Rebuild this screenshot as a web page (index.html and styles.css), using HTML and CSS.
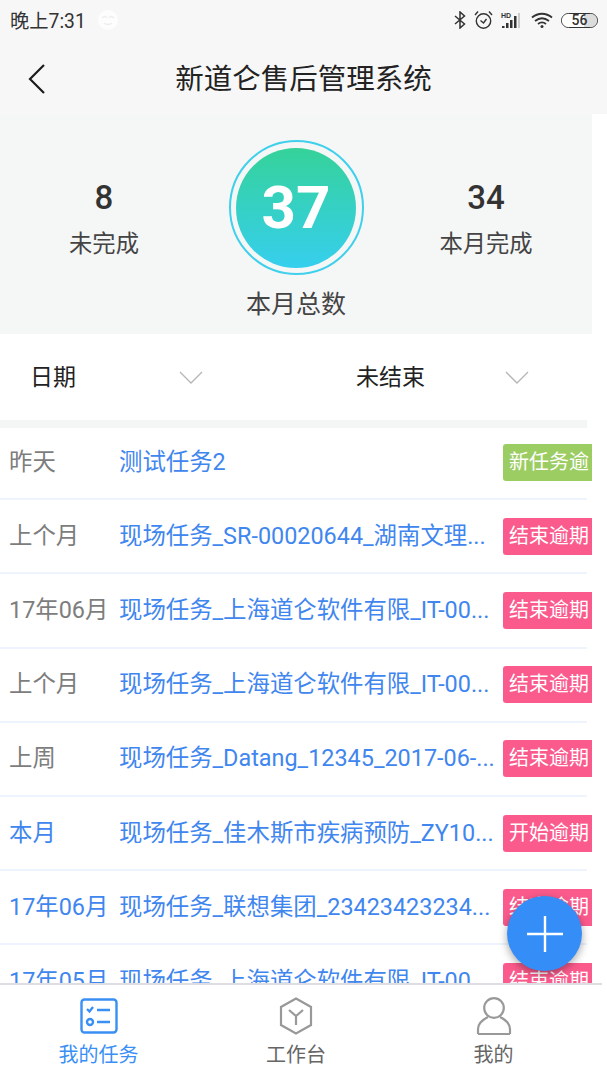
FILE: index.html
```html
<!DOCTYPE html>
<html lang="zh-CN">
<head>
<meta charset="utf-8">
<title>新道仑售后管理系统</title>
<link rel="stylesheet" href="styles.css">
</head>
<body>
<div class="app">
  <div class="topbar">
    <div class="status">
      <div class="status-left">
        <span class="clock">晚上7:31</span>
        <svg class="face" width="22" height="22" viewBox="0 0 22 22"><circle cx="11" cy="11" r="10" fill="#fdfdfd"/><path d="M5 9c2-2 4-2 5 0M12 9c1-2 3-2 5 0M7 14c2 2 6 2 8 0" fill="none" stroke="#eee" stroke-width="1.5"/></svg>
      </div>
      <div class="status-right">
        <svg width="12" height="18" viewBox="0 0 12 18"><path d="M1 5l9.500 8-4.500 4V1l4.500 4L1 13" fill="none" stroke="#333" stroke-width="1.500"/></svg>
        <svg width="19" height="20" viewBox="0 0 19 20"><circle cx="9.500" cy="11" r="7.200" fill="none" stroke="#333" stroke-width="1.400"/><path d="M6.500 10.500l3 2.500 3-4M1 5l3-3.500M18 5l-3-3.500" fill="none" stroke="#333" stroke-width="1.400"/></svg>
        <svg width="22" height="18" viewBox="0 0 22 18"><text x="0" y="6.500" class="hd">HD</text><path d="M1 17h2.500v-2H1zM5 17h2.500v-5H5zM9 17h2.500V9H9zM13 17h2.500V5H13z" fill="#333"/><path d="M17 17h2V2h-2z" fill="#ccc"/></svg>
        <svg width="22" height="16" viewBox="0 0 22 16"><path d="M1 5.500c6-5 14-5 20 0M4 9c4.500-3.500 9.500-3.500 14 0M7 12c2.500-2 5.500-2 8 0" fill="none" stroke="#333" stroke-width="1.800"/><circle cx="11" cy="14.500" r="1.500" fill="#333"/></svg>
        <div class="battery"><span class="battery-fill"></span><span class="battery-num">56</span></div>
      </div>
    </div>
    <div class="nav">
      <svg class="back" width="20" height="32" viewBox="0 0 20 32"><path d="M18 2L4 16l14 14" fill="none" stroke="#1c1c1c" stroke-width="2.200"/></svg>
      <div class="nav-title">新道仑售后管理系统</div>
    </div>
  </div>

  <section class="stats">
    <div class="stat stat-left"><div class="stat-num">8</div><div class="stat-label">未完成</div></div>
    <div class="total">
      <div class="ring"><div class="disc">37</div></div>
      <div class="total-label">本月总数</div>
    </div>
    <div class="stat stat-right"><div class="stat-num">34</div><div class="stat-label">本月完成</div></div>
  </section>

  <section class="filters">
    <div class="filter filter-date"><span>日期</span><svg class="chev" width="24" height="14" viewBox="0 0 24 14"><path d="M1 1l11 11L23 1" fill="none" stroke="#b5b5b5" stroke-width="1.300"/></svg></div>
    <div class="filter filter-state"><span>未结束</span><svg class="chev" width="24" height="14" viewBox="0 0 24 14"><path d="M1 1l11 11L23 1" fill="none" stroke="#b5b5b5" stroke-width="1.300"/></svg></div>
  </section>
  <div class="gap"></div>

  <section class="list">
    <div class="row"><span class="when">昨天</span><span class="name">测试任务2</span><span class="tag tag-green">新任务逾</span></div>
    <div class="row"><span class="when">上个月</span><span class="name">现场任务_SR-00020644_湖南文理...</span><span class="tag">结束逾期</span></div>
    <div class="row"><span class="when">17年06月</span><span class="name">现场任务_上海道仑软件有限_IT-00...</span><span class="tag">结束逾期</span></div>
    <div class="row"><span class="when">上个月</span><span class="name">现场任务_上海道仑软件有限_IT-00...</span><span class="tag">结束逾期</span></div>
    <div class="row"><span class="when">上周</span><span class="name">现场任务_Datang_12345_2017-06-...</span><span class="tag">结束逾期</span></div>
    <div class="row"><span class="when blue">本月</span><span class="name">现场任务_佳木斯市疾病预防_ZY10...</span><span class="tag">开始逾期</span></div>
    <div class="row"><span class="when blue">17年06月</span><span class="name">现场任务_联想集团_23423423234...</span><span class="tag">结束逾期</span></div>
    <div class="row"><span class="when blue">17年05月</span><span class="name">现场任务_上海道仑软件有限_IT-00...</span><span class="tag">结束逾期</span></div>
  </section>

  <nav class="tabs">
    <div class="tab tab-on">
      <svg width="38" height="36" viewBox="0 0 38 36"><rect x="1.500" y="1.500" width="35" height="33" rx="3" fill="none" stroke="#3a8ff5" stroke-width="2.400"/><path d="M7 11l2.500 2.500L13 9M17 12h13M17 24h13" fill="none" stroke="#3a8ff5" stroke-width="2.400"/><circle cx="10" cy="24" r="3" fill="none" stroke="#3a8ff5" stroke-width="2.400"/></svg>
      <span>我的任务</span>
    </div>
    <div class="tab">
      <svg width="36" height="38" viewBox="0 0 36 38"><path d="M18 1.500L33 10v18l-15 8.500L3 28V10z" fill="none" stroke="#999" stroke-width="2.200"/><path d="M11 13l7 6 7-6M18 19v9" fill="none" stroke="#999" stroke-width="2.200"/></svg>
      <span>工作台</span>
    </div>
    <div class="tab">
      <svg width="36" height="38" viewBox="0 0 36 38"><circle cx="18" cy="11" r="9.800" fill="none" stroke="#999" stroke-width="2.200"/><path d="M2 37v-5c0-6 6-10 10-12M34 37v-5c0-6-6-10-10-12M2 37h32" fill="none" stroke="#999" stroke-width="2.200"/></svg>
      <span>我的</span>
    </div>
  </nav>

  <button class="fab" type="button" aria-label="新建"><svg width="38" height="38" viewBox="0 0 38 38"><path d="M19 1v36M1 19h36" stroke="#fff" stroke-width="2.400"/></svg></button>
</div>
</body>
</html>
```

FILE: styles.css
```css
* { box-sizing: border-box; }
html, body { margin: 0; padding: 0; }
body { background: #fff; font-family: Roboto, "Noto Sans CJK SC", sans-serif; }
.app { position: relative; width: 607px; height: 1080px; overflow: hidden; display: flex; flex-direction: column; background: #fff; }

.topbar { height: 114px; background: #f7f7f7; flex: none; }
.status { height: 40px; display: flex; justify-content: space-between; align-items: center; padding: 0 9px 0 10px; }
.status-left { display: flex; align-items: center; gap: 11px; }
.clock { font-size: 19.300px; color: #333; }
.status-right { display: flex; align-items: center; gap: 8px; }
.hd { font: 700 7px "Liberation Sans", sans-serif; fill: #333; }
.battery { position: relative; width: 37px; height: 15px; border: 1.300px solid #333; border-radius: 8px; display: flex; align-items: center; justify-content: center; overflow: hidden; }
.battery-fill { position: absolute; left: 0; top: 0; bottom: 0; width: 100%; background: linear-gradient(90deg, #fff 0 62%, #dcdcdc 62%); }
.battery-num { position: relative; font-size: 14px; font-weight: 500; color: #333; line-height: 13px; }

.nav { position: relative; height: 74px; padding-top: 6px; display: flex; align-items: center; justify-content: center; }
.back { position: absolute; left: 26px; top: 23px; }
.nav-title { font-size: 28.500px; color: #222; line-height: 68px; }

.stats { width: 592px; height: 220px; flex: none; background: #f5f6f6; display: flex; align-items: flex-start; }
.stat { text-align: center; padding-top: 64px; }
.stat-left { width: 208px; }
.stat-right { width: 178px; margin-left: 13px; }
.stat-num { font-size: 33px; font-weight: 500; color: #333; line-height: 40px; }
.stat-label { font-size: 23.300px; color: #444; line-height: 34px; margin-top: 9px; }
.total { width: 176px; padding-top: 26px; display: flex; flex-direction: column; align-items: center; }
.ring { width: 135px; height: 135px; border-radius: 50%; border: 2px solid #3fd0ec; display: flex; align-items: center; justify-content: center; }
.disc { width: 120px; height: 120px; border-radius: 50%; background: linear-gradient(180deg, #35d29a, #36cfee); color: #fff; font-size: 60px; font-weight: 700; line-height: 120px; text-align: center; }
.total-label { font-size: 25px; color: #444; line-height: 36px; margin-top: 12px; }

.filters { height: 86px; flex: none; display: flex; align-items: center; }
.filter { display: flex; align-items: center; font-size: 23px; color: #222; }
.filter-date { margin-left: 30px; width: 326px; }
.filter-state { width: 185px; }
.filter span { width: 149px; margin-bottom: 4px; }
.chev { flex: none; margin-top: 2px; }

.gap { width: 587px; height: 8px; flex: none; background: #f4f5f5; }

.list { flex: 1; min-height: 0; overflow: hidden; margin-top: -2px; }
.row { width: 592px; height: 74.200px; display: flex; align-items: center; padding-bottom: 2px; position: relative; }
.row::after { content: ""; position: absolute; left: 0; bottom: 0; width: 587px; height: 2px; background: #eef4fd; }
.when { width: 119px; padding-left: 9px; font-size: 23.400px; color: #7d7d7d; white-space: nowrap; flex: none; margin-bottom: 5px; }
.when.blue { color: #3f86ef; }
.name { flex: 1; min-width: 0; font-size: 23.400px; color: #3f86ef; white-space: nowrap; overflow: hidden; margin-bottom: 5px; }
.tag { width: 89px; height: 37px; flex: none; border-radius: 3px 0 0 3px; background: #fb5a8c; color: #fff; font-size: 20px; line-height: 37px; padding-left: 3px; text-align: center; white-space: nowrap; overflow: hidden; margin-left: 8px; }
.tag-green { background: #9ccd62; }

.tabs { height: 97px; flex: none; background: #fff; border-top: 2px solid #dedee2; display: flex; position: relative; z-index: 1; padding-top: 12px; width: 602px; }
.tab { width: 197px; display: flex; flex-direction: column; align-items: center; font-size: 20px; color: #666; }
.tab:nth-child(2) { width: 198px; }
.tab svg { height: 38px; }
.tab span { margin-top: 6px; line-height: 28px; }
.tab-on { color: #3a8ff5; }

.fab { position: absolute; z-index: 2; left: 507px; top: 896px; width: 75px; height: 75px; border: none; padding: 0; border-radius: 50%; background: #358ef8; box-shadow: 0 3px 8px rgba(0,0,0,.35); display: flex; align-items: center; justify-content: center; }
```
